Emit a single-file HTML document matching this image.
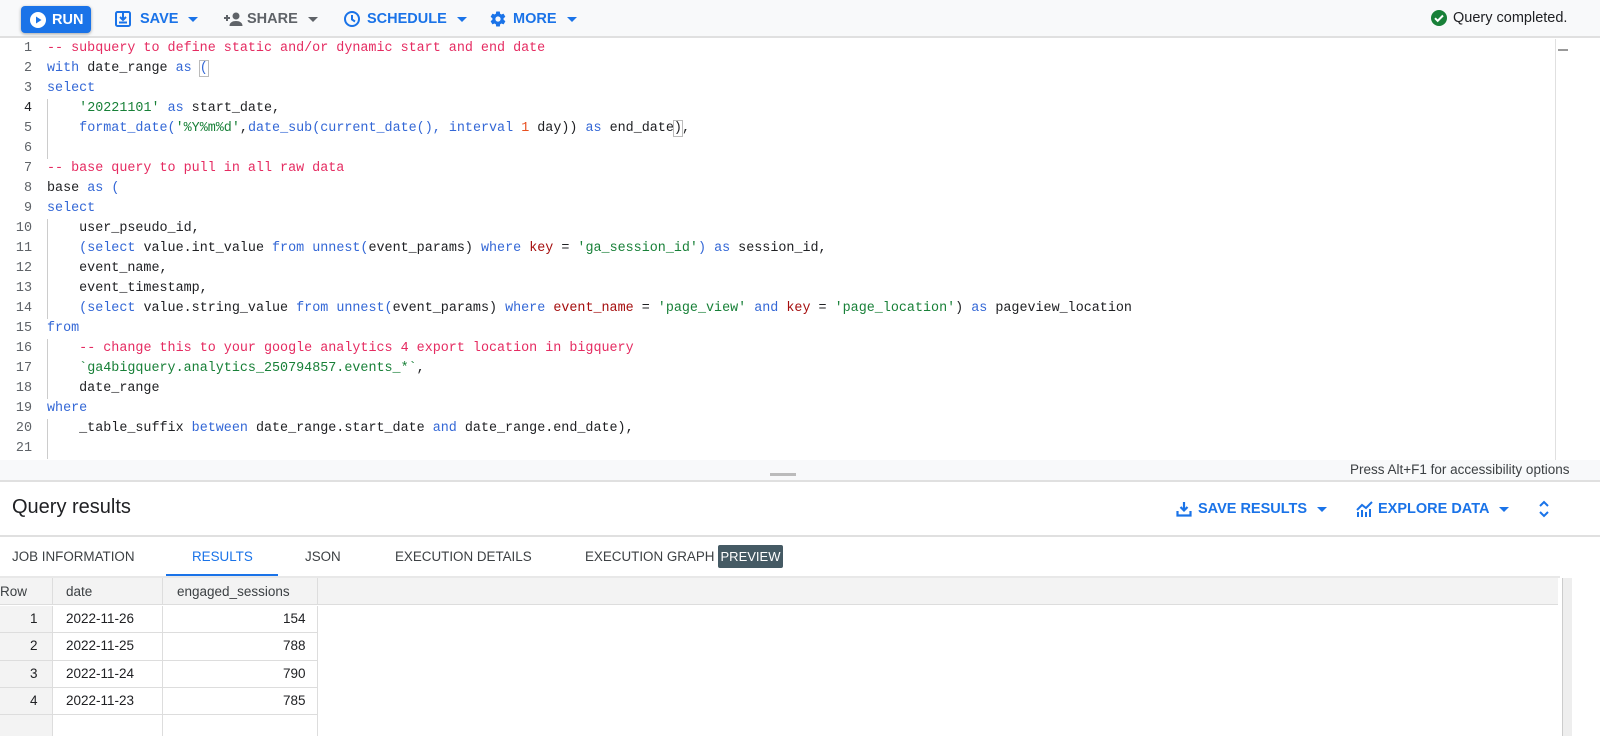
<!DOCTYPE html>
<html><head><meta charset="utf-8"><style>
*{box-sizing:border-box;margin:0;padding:0}
body{width:1600px;height:736px;overflow:hidden;background:#fff;font-family:"Liberation Sans",Arial,sans-serif;color:#202124;position:relative}
div{white-space:nowrap}
.tb{position:absolute;left:0;top:0;width:1600px;height:38px;background:#f8f9fa;border-bottom:2px solid #e0e0e0}
.btn{position:absolute;top:0;height:38px;display:flex;align-items:center;font-size:14.5px;font-weight:bold;color:#1a73e8;letter-spacing:0}
.run{position:absolute;left:21px;top:6px;width:70px;height:27px;background:#1a73e8;border-radius:4px;box-shadow:0 1px 3px rgba(0,0,0,.35);color:#fff;font-weight:bold;font-size:14.5px;display:flex;align-items:center;padding-left:9px}
.caret{display:inline-block;width:0;height:0;border-left:5px solid transparent;border-right:5px solid transparent;border-top:5px solid currentColor;margin-left:10px}
.code{position:absolute;left:0;top:39px;width:1555px;height:421px;font-family:"Liberation Mono",monospace;font-size:13.4px}
.ln{position:absolute;left:0;width:32px;text-align:right;color:#5f6368;height:20px;line-height:20px}
.tx{position:absolute;left:47px;white-space:pre;height:20px;line-height:20px;color:#202124}
.c{color:#e52b61}.k{color:#3367d6}.s{color:#188038}.r{color:#a50e0e}.n{color:#e8501f}
.guide{position:absolute;left:47px;width:1px;background:#ccc}
.status{position:absolute;left:0;top:460px;width:1600px;height:22px;background:#f8f9fa;border-bottom:2px solid #e0e0e0;font-size:13.5px;color:#3c4043}
.tab{position:absolute;top:549px;font-size:13.4px;color:#3c4043}
.cell{position:absolute;font-size:13.5px}
</style></head><body>
<div class="tb">
 <div class="run"><svg width="16" height="16" viewBox="0 0 16 16"><circle cx="8" cy="8" r="8" fill="#fff"/><path d="M6 4.5v7l5.5-3.5z" fill="#1a73e8"/></svg><span style="margin-left:6px">RUN</span></div>
 <div class="btn" style="left:114px"><svg width="18" height="18" viewBox="0 0 18 18"><rect x="2" y="2" width="14" height="14" rx="1.5" fill="none" stroke="#1a73e8" stroke-width="2"/><path d="M9 3v7M6 7l3 3 3-3M5 12.5h8" stroke="#1a73e8" stroke-width="2" fill="none"/></svg><span style="margin-left:8px">SAVE</span><span class="caret"></span></div>
 <div class="btn" style="left:223px;color:#5f6368"><svg width="20" height="16" viewBox="0 0 20 16"><path d="M1 7h6M4 4v6" stroke="#5f6368" stroke-width="2"/><circle cx="13" cy="5" r="3.5" fill="#5f6368"/><path d="M6.5 15c0-3.5 3-5 6.5-5s6.5 1.5 6.5 5z" fill="#5f6368"/></svg><span style="margin-left:4px">SHARE</span><span class="caret"></span></div>
 <div class="btn" style="left:343px"><svg width="18" height="18" viewBox="0 0 18 18"><circle cx="9" cy="9" r="7" fill="none" stroke="#1a73e8" stroke-width="2"/><path d="M9 5v4.5l3 2" stroke="#1a73e8" stroke-width="2" fill="none"/></svg><span style="margin-left:6px">SCHEDULE</span><span class="caret"></span></div>
 <div class="btn" style="left:489px"><svg width="18" height="18" viewBox="0 0 24 24"><path fill="#1a73e8" d="M19.4 13c.04-.3.06-.65.06-1s-.02-.7-.07-1l2.1-1.65c.2-.15.24-.42.12-.64l-2-3.460c-.12-.22-.39-.3-.61-.22l-2.49 1c-.52-.4-1.080-.73-1.690-.98l-.38-2.650A.5.5 0 0 0 14 2h-4c-.25 0-.46.18-.49.42l-.38 2.65c-.61.25-1.17.59-1.69.98l-2.49-1a.5.5 0 0 0-.61.22l-2 3.46c-.13.22-.07.49.12.64L4.57 11c-.05.3-.07.65-.07 1s.02.7.07 1l-2.11 1.65c-.19.15-.24.42-.12.64l2 3.46c.12.22.39.3.61.22l2.49-1c.52.4 1.08.73 1.69.98l.38 2.65c.03.24.24.42.49.42h4c.25 0 .46-.18.49-.42l.38-2.65c.61-.25 1.17-.59 1.69-.98l2.49 1c.23.09.49 0 .61-.22l2-3.46c.12-.22.07-.49-.12-.64zM12 15.5a3.5 3.5 0 1 1 0-7 3.5 3.5 0 0 1 0 7z"/></svg><span style="margin-left:6px">MORE</span><span class="caret"></span></div>
 <div style="position:absolute;left:1430px;top:9px;display:flex;align-items:center;font-size:14.5px;color:#202124"><svg width="18" height="18" viewBox="0 0 18 18"><circle cx="9" cy="9" r="8" fill="#188038"/><path d="M5 9.2l2.7 2.6L13 6.5" stroke="#fff" stroke-width="2" fill="none"/></svg><span style="margin-left:5px">Query completed.</span></div>
</div>
<div class="code">
 <div class="guide" style="top:60px;height:40px"></div>
 <div class="guide" style="top:300px;height:60px"></div>
 <div class="guide" style="top:380px;height:40px"></div>
 <div style="position:absolute;left:1555px;top:0;width:1px;height:421px;background:#e0e0e0"></div>
 <div style="position:absolute;left:1558px;top:10px;width:10px;height:2px;background:#999"></div>
 <div class="ln" style="top:0">1</div><div class="tx" style="top:0"><span class="c">-- subquery to define static and/or dynamic start and end date</span></div>
 <div class="ln" style="top:20px">2</div><div class="tx" style="top:20px"><span class="k">with</span> date_range <span class="k">as</span> <span class="k" style="outline:1px solid #bbb">(</span></div>
 <div class="ln" style="top:40px">3</div><div class="tx" style="top:40px"><span class="k">select</span></div>
 <div class="ln" style="top:60px;color:#202124">4</div><div class="tx" style="top:60px">    <span class="s">'20221101'</span> <span class="k">as</span> start_date,</div>
 <div class="ln" style="top:80px">5</div><div class="tx" style="top:80px">    <span class="k">format_date(</span><span class="s">'%Y%m%d'</span>,<span class="k">date_sub(current_date(),</span> <span class="k">interval</span> <span class="n">1</span> day)) <span class="k">as</span> end_date<span style="outline:1px solid #bbb">)</span>,</div>
 <div class="ln" style="top:100px">6</div><div class="guide" style="top:100px;height:20px"></div>
 <div class="ln" style="top:120px">7</div><div class="tx" style="top:120px"><span class="c">-- base query to pull in all raw data</span></div>
 <div class="ln" style="top:140px">8</div><div class="tx" style="top:140px">base <span class="k">as</span> <span class="k">(</span></div>
 <div class="ln" style="top:160px">9</div><div class="tx" style="top:160px"><span class="k">select</span></div>
 <div class="ln" style="top:180px">10</div><div class="tx" style="top:180px">    user_pseudo_id,</div>
 <div class="guide" style="top:180px;height:100px"></div>
 <div class="ln" style="top:200px">11</div><div class="tx" style="top:200px">    <span class="k">(select</span> value.int_value <span class="k">from</span> <span class="k">unnest(</span>event_params) <span class="k">where</span> <span class="r">key</span> = <span class="s">'ga_session_id'</span><span class="k">)</span> <span class="k">as</span> session_id,</div>
 <div class="ln" style="top:220px">12</div><div class="tx" style="top:220px">    event_name,</div>
 <div class="ln" style="top:240px">13</div><div class="tx" style="top:240px">    event_timestamp,</div>
 <div class="ln" style="top:260px">14</div><div class="tx" style="top:260px">    <span class="k">(select</span> value.string_value <span class="k">from</span> <span class="k">unnest(</span>event_params) <span class="k">where</span> <span class="r">event_name</span> = <span class="s">'page_view'</span> <span class="k">and</span> <span class="r">key</span> = <span class="s">'page_location'</span>) <span class="k">as</span> pageview_location</div>
 <div class="ln" style="top:280px">15</div><div class="tx" style="top:280px"><span class="k">from</span></div>
 <div class="ln" style="top:300px">16</div><div class="tx" style="top:300px">    <span class="c">-- change this to your google analytics 4 export location in bigquery</span></div>
 <div class="ln" style="top:320px">17</div><div class="tx" style="top:320px">    <span class="s">`ga4bigquery.analytics_250794857.events_*`</span>,</div>
 <div class="ln" style="top:340px">18</div><div class="tx" style="top:340px">    date_range</div>
 <div class="ln" style="top:360px">19</div><div class="tx" style="top:360px"><span class="k">where</span></div>
 <div class="ln" style="top:380px">20</div><div class="tx" style="top:380px">    _table_suffix <span class="k">between</span> date_range.start_date <span class="k">and</span> date_range.end_date),</div>
 <div class="ln" style="top:400px">21</div>
</div>
<div class="status"><div style="position:absolute;left:770px;top:13px;width:26px;height:3px;background:#bbb"></div><div style="position:absolute;left:1350px;top:2px">Press Alt+F1 for accessibility options</div></div>
<div style="position:absolute;left:12px;top:496px;font-size:20px;color:#202124">Query results</div>
<div class="btn" style="left:1176px;top:490px"><svg width="16" height="16" viewBox="0 0 16 16"><path d="M8 1v8M4.5 6l3.5 3.5L11.5 6" stroke="#1a73e8" stroke-width="2.2" fill="none"/><path d="M1.5 10v4.5h13V10" stroke="#1a73e8" stroke-width="2.2" fill="none"/></svg><span style="margin-left:6px">SAVE RESULTS</span><span class="caret"></span></div>
<div class="btn" style="left:1356px;top:490px"><svg width="18" height="16" viewBox="0 0 18 16"><path d="M1 16V11h2v5zM5 16V9h2v7zM9 16V11h2v5zM13 16V8h2v8z" fill="#1a73e8"/><path d="M1 9l5-5 4 3 6-6" stroke="#1a73e8" stroke-width="2" fill="none"/></svg><span style="margin-left:4px">EXPLORE DATA</span><span class="caret"></span></div>
<svg style="position:absolute;left:1538px;top:500px" width="12" height="18" viewBox="0 0 12 18"><path d="M2 6l4-4 4 4M2 12l4 4 4-4" stroke="#1a73e8" stroke-width="2" fill="none"/></svg>
<div style="position:absolute;left:0;top:535px;width:1600px;height:2px;background:#e0e0e0"></div>
<div class="tab" style="left:12px">JOB INFORMATION</div>
<div class="tab" style="left:192px;color:#1a73e8">RESULTS</div>
<div style="position:absolute;top:574px;left:166px;width:112px;height:3px;background:#1a73e8"></div>
<div class="tab" style="left:305px">JSON</div>
<div class="tab" style="left:395px">EXECUTION DETAILS</div>
<div class="tab" style="left:585px">EXECUTION GRAPH</div>
<div style="position:absolute;top:545px;left:718px;width:65px;height:23px;background:#455a64;color:#fff;font-size:13px;line-height:23px;text-align:center;border-radius:2px">PREVIEW</div>
<div style="position:absolute;left:0;top:576px;width:1560px;height:2px;background:#e8e8e8"></div>
<div style="position:absolute;left:0;top:578px;width:1558px;height:27px;background:#f3f3f3;border-bottom:1px solid #ddd;font-size:13.5px;color:#3c4043">
 <div style="position:absolute;left:0;top:6px">Row</div>
 <div style="position:absolute;left:52px;top:0;width:1px;height:27px;background:#ddd"></div>
 <div style="position:absolute;left:66px;top:6px">date</div>
 <div style="position:absolute;left:162px;top:0;width:1px;height:27px;background:#ddd"></div>
 <div style="position:absolute;left:177px;top:6px">engaged_sessions</div>
 <div style="position:absolute;left:317px;top:0;width:1px;height:27px;background:#ddd"></div>
</div>
<div style="position:absolute;left:1562px;top:578px;width:10px;height:158px;background:#eee;border-left:1px solid #ccc"></div>
<div style="position:absolute;left:0;top:606px;width:320px;height:130px">
 <div style="position:absolute;left:0;top:0;width:53px;height:130px;background:#f3f3f3"></div>
 <div style="position:absolute;left:0;top:0;width:318px;height:130px;border-right:1px solid #ddd"></div>
 <div style="position:absolute;left:52px;top:0;width:1px;height:130px;background:#ddd"></div>
 <div style="position:absolute;left:162px;top:0;width:1px;height:130px;background:#ddd"></div>
 <div class="cell" style="left:30px;top:5px">1</div><div class="cell" style="left:66px;top:5px">2022-11-26</div><div class="cell" style="left:283px;top:5px">154</div>
 <div style="position:absolute;left:0;top:26px;width:318px;height:1px;background:#ddd"></div>
 <div class="cell" style="left:30px;top:32px">2</div><div class="cell" style="left:66px;top:32px">2022-11-25</div><div class="cell" style="left:283px;top:32px">788</div>
 <div style="position:absolute;left:0;top:54px;width:318px;height:1px;background:#ddd"></div>
 <div class="cell" style="left:30px;top:60px">3</div><div class="cell" style="left:66px;top:60px">2022-11-24</div><div class="cell" style="left:283px;top:60px">790</div>
 <div style="position:absolute;left:0;top:81px;width:318px;height:1px;background:#ddd"></div>
 <div class="cell" style="left:30px;top:87px">4</div><div class="cell" style="left:66px;top:87px">2022-11-23</div><div class="cell" style="left:283px;top:87px">785</div>
 <div style="position:absolute;left:0;top:108px;width:318px;height:1px;background:#ddd"></div>
</div>
</body></html>
